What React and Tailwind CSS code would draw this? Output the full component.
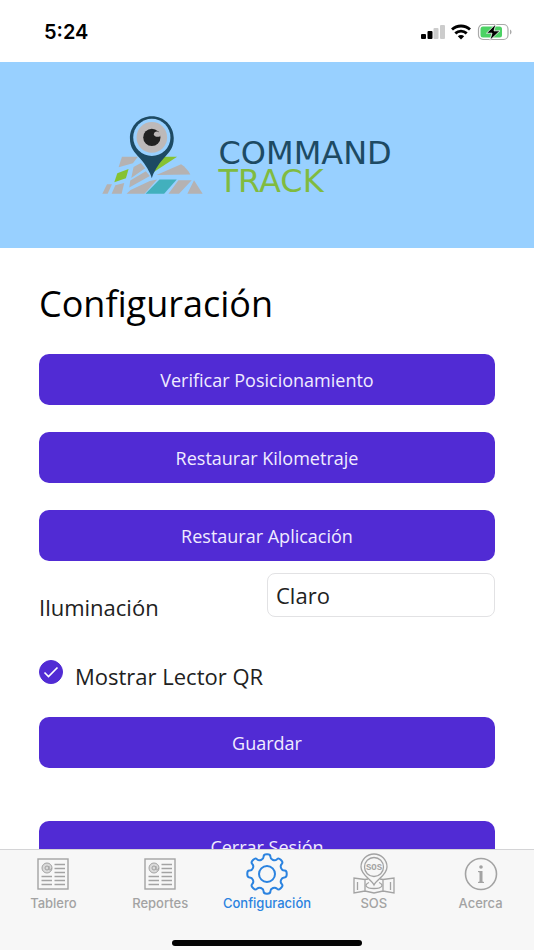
// App.jsx
function SignalIcon() {
  return (
    <svg viewBox="0 0 24 16" className="h-4 w-6" aria-hidden="true">
      <rect x="0" y="10" width="5" height="5" rx="1" fill="#000" />
      <rect x="6.500" y="7" width="5" height="8" rx="1" fill="#000" />
      <rect x="12.500" y="4" width="5" height="11" rx="1" fill="#ccc" />
      <rect x="19" y="1" width="5" height="14" rx="1" fill="#ccc" />
    </svg>
  );
}

function WifiIcon() {
  return (
    <svg viewBox="0 0 20 16" className="h-4 w-5" fill="none" stroke="#000" strokeWidth="2.8" aria-hidden="true">
      <path d="M1 5.6C6 .8 14 .8 19 5.6" />
      <path d="M4.3 9.4c3.3-3 8.1-3 11.4 0" />
      <path d="M10 15.5 6.8 12.3c1.8-1.6 4.6-1.6 6.4 0z" fill="#000" stroke="none" />
    </svg>
  );
}

function BatteryIcon() {
  return (
    <svg viewBox="0 0 35 18" className="h-[18px] w-[35px]" aria-hidden="true">
      <rect x="1.500" y="1.500" width="29.500" height="15" rx="4.500" fill="#fff" stroke="#aaa" strokeWidth="1.200" />
      <rect x="3.500" y="3.500" width="21.500" height="11" rx="2.500" fill="#4cd264" />
      <path d="M33 6.500v5c2-.8 2-4.200 0-5z" fill="#aaa" />
      <path d="M19 .8 9.500 10.200h5.500L12.800 17.400 23 7.800h-6z" fill="#000" stroke="#fff" strokeWidth=".8" />
    </svg>
  );
}

function LogoMark() {
  return (
    <svg viewBox="24 26 304 240" className="h-20 w-[101px]" aria-hidden="true">
      <g fill="#b5b2b2">
        <path d="M84 151h48l-15 20-43 12z" />
        <path d="M39 234h15l-13 29H25z" />
        <path d="M64 237l27-7-8 33H53z" />
        <path d="M119 182l22-12 13 16-42 29z" />
        <path d="M109 223l47-28 12 14-62 35z" />
        <path d="M98 263l12-12 58-27 22-4-38 43z" />
        <path d="M188 206l74-32c12 8 20 17 28 31z" />
        <path d="M254 222h40l-38 41h-32z" />
        <path d="M301 222l26 41h-46z" />
      </g>
      <path d="M70 201l34-13-8 28-35 12z" fill="#86c232" />
      <path d="M196 151h54l-70 46z" fill="#86c232" />
      <path d="M197 220h52l-38 43h-56z" fill="#42b0bd" />
      <path
        d="M174 29c-37 0-66 29-66 66 0 30 13 42 30 61 18 20 31 43 36 60 5-17 18-40 36-60 17-19 30-31 30-61 0-37-29-66-66-66z"
        fill="#1d4a63"
      />
      <circle cx="174" cy="93" r="56" fill="#98d0ff" />
      <circle cx="174" cy="93" r="46" fill="#bdb9b9" />
      <circle cx="174" cy="93" r="26" fill="#222" />
      <path d="M180 84c0-7 7-11 13-8l7 6-2 8c-7 3-17 1-18-6z" fill="#bdb9b9" />
    </svg>
  );
}

function NewsIcon() {
  return (
    <svg viewBox="0 0 32 32" className="size-8" fill="none" stroke="currentColor" aria-hidden="true">
      <rect x="1" y="1" width="30" height="30" strokeWidth="1.400" />
      <circle cx="10" cy="10" r="5" fill="currentColor" fillOpacity=".35" />
      <circle cx="10" cy="10" r="2" />
      <path d="M12 8v3c0 1.500 2.500 1.500 2.500-1" />
      <path
        d="M17.500 6.500h10.500M17.500 10.500h10.500M17.500 14.500h10.500M4.500 18.500h10.500M17.500 18.500h10.500M4.500 22.500h10.500M17.500 22.500h10.500M4.500 26.500h10.500M17.500 26.500h10.500"
        strokeWidth="1.400"
      />
    </svg>
  );
}

// eight teeth, every corner rounded with a quadratic curve
function gearPath(cx, cy, outer, inner) {
  const points = [];
  for (let i = 0; i < 8; i++) {
    [[-13, inner], [-9.5, outer], [9.5, outer], [13, inner]].forEach(([offset, r]) => {
      const angle = ((i * 45 + offset - 90) * Math.PI) / 180;
      points.push([cx + r * Math.cos(angle), cy + r * Math.sin(angle)]);
    });
  }
  const lerp = (a, b, t) => [a[0] + (b[0] - a[0]) * t, a[1] + (b[1] - a[1]) * t];
  return (
    points
      .map((p, i) => {
        const prev = points[(i + points.length - 1) % points.length];
        const next = points[(i + 1) % points.length];
        const from = lerp(p, prev, 0.45);
        const to = lerp(p, next, 0.45);
        return `${i ? 'L' : 'M'}${from.join(' ')}Q${p.join(' ')} ${to.join(' ')}`;
      })
      .join('') + 'z'
  );
}

function GearIcon() {
  return (
    <svg viewBox="0 0 42 42" className="size-[42px]" fill="none" stroke="currentColor" strokeWidth="2" aria-hidden="true">
      <path d={gearPath(21, 21, 20, 15.5)} />
      <circle cx="21" cy="21" r="8" />
    </svg>
  );
}

function SosIcon() {
  return (
    <svg viewBox="0 0 42 42" className="size-[42px]" fill="none" stroke="currentColor" strokeWidth="1.300" aria-hidden="true">
      <path d="M21 32c-3-6-13-10-13-18a13 13 0 0 1 26 0c0 8-10 12-13 18z" />
      <circle cx="21" cy="14" r="9.500" />
      <text x="21" y="17" textAnchor="middle" fontSize="9" fontWeight="700" fill="currentColor" stroke="none" fontFamily="Liberation Mono, monospace">
        SOS
      </text>
      <path d="M12 26.500 1 25v15l11-2 9 2 9-2 11 2V25l-11 1.500M12 26.500l3-.5M30 26.500l-3-.5M12 26.500V38M30 26.500V38M4.500 29v8M37.500 29v8" />
      <path d="M16 29.500c-5 2-4 6 5 6s10-4 5-6" />
    </svg>
  );
}

function InfoIcon() {
  return (
    <svg viewBox="0 0 34 34" className="size-[34px]" aria-hidden="true">
      <circle cx="17" cy="17" r="15.500" fill="none" stroke="currentColor" strokeWidth="1.600" />
      <circle cx="17" cy="10" r="1.800" fill="currentColor" />
      <path d="M14 14h4.500v10.500l1.500.5v1h-6v-1l1.500-.5v-9l-1.500-.5z" fill="currentColor" />
    </svg>
  );
}

const tabs = [
  { label: 'Tablero', icon: NewsIcon },
  { label: 'Reportes', icon: NewsIcon },
  { label: 'Configuración', icon: GearIcon, active: true },
  { label: 'SOS', icon: SosIcon },
  { label: 'Acerca', icon: InfoIcon },
];

function ActionButton({ children }) {
  return (
    <button type="button" className="block h-[51px] w-full shrink-0 rounded-[10px] bg-[#512bd4] text-lg text-[#f0ecff]">
      {children}
    </button>
  );
}

function App() {
  return (
    <div className="flex h-screen flex-col overflow-hidden bg-white font-['Open_Sans',sans-serif] text-[#212121]">
      <div className="flex h-[62px] shrink-0 items-center justify-between pt-0.5 pr-[22px] pl-11">
        <span className="font-['Inter',sans-serif] text-xl font-semibold text-black">5:24</span>
        <div className="flex items-center gap-1.5">
          <SignalIcon />
          <WifiIcon />
          <BatteryIcon />
        </div>
      </div>

      <header className="flex h-[186px] shrink-0 items-center justify-center gap-4 bg-[#98d0ff] pl-0.5">
        <LogoMark />
        <div className="flex w-[216px] flex-col pt-6 font-['DejaVu_Sans',sans-serif] text-[32px] leading-7">
          <span className="text-[#1d4a63]">COMMAND</span>
          <span className="text-[#80bb3f]">TRACK</span>
        </div>
      </header>

      <main className="flex min-h-0 flex-1 flex-col overflow-y-auto px-[39px] pt-8 [scrollbar-width:none]">
        <h1 className="text-4xl leading-[48px] text-black">Configuración</h1>
        <div className="mt-[26px] flex flex-col gap-[27px]">
          <ActionButton>Verificar Posicionamiento</ActionButton>
          <ActionButton>Restaurar Kilometraje</ActionButton>
          <ActionButton>Restaurar Aplicación</ActionButton>
        </div>
        <div className="mt-3 grid grid-cols-2 text-[22px]">
          <label htmlFor="iluminacion" className="pt-[18px] leading-8">Iluminación</label>
          <select
            id="iluminacion"
            className="h-11 w-full appearance-none rounded-lg border border-[#e2e2e4] bg-white px-2"
          >
            <option>Claro</option>
            <option>Oscuro</option>
          </select>
        </div>
        <div className="mt-[37px] flex items-start gap-3 text-[22px] leading-8">
          <span className="grid size-6 place-items-center">
            <input
              id="lector"
              type="checkbox"
              defaultChecked
              className="col-start-1 row-start-1 size-6 appearance-none rounded-full border border-[#512bd4] checked:bg-[#512bd4]"
            />
            <svg viewBox="0 0 24 24" className="pointer-events-none col-start-1 row-start-1 size-6" fill="none" stroke="#fff" strokeWidth="1.600" aria-hidden="true">
              <path d="M5.500 12.500l4 4 9-9" />
            </svg>
          </span>
          <label htmlFor="lector">Mostrar Lector QR</label>
        </div>
        <div className="mt-[25px] flex flex-col gap-[53px]">
          <ActionButton>Guardar</ActionButton>
          <ActionButton>Cerrar Sesión</ActionButton>
        </div>
      </main>

      <nav className="flex h-[101px] shrink-0 flex-col items-center justify-between border-t border-[#d4d4d6] bg-[#f7f7f7] pb-1">
        <div className="grid w-full grid-cols-5">
          {tabs.map(({ label, icon: Icon, active }) => (
            <a
              key={label}
              href="#"
              className={`flex flex-col items-center font-['Inter',sans-serif] text-[13px] leading-[18px] font-medium ${active ? 'text-[#2b83e0]' : 'text-[#a3a3a3]'}`}
            >
              <span className="flex h-11 items-center pt-1">
                <Icon />
              </span>
              {label}
            </a>
          ))}
        </div>
        <div className="h-[6px] w-[190px] rounded-full bg-black" />
      </nav>
    </div>
  );
}

export default App;
